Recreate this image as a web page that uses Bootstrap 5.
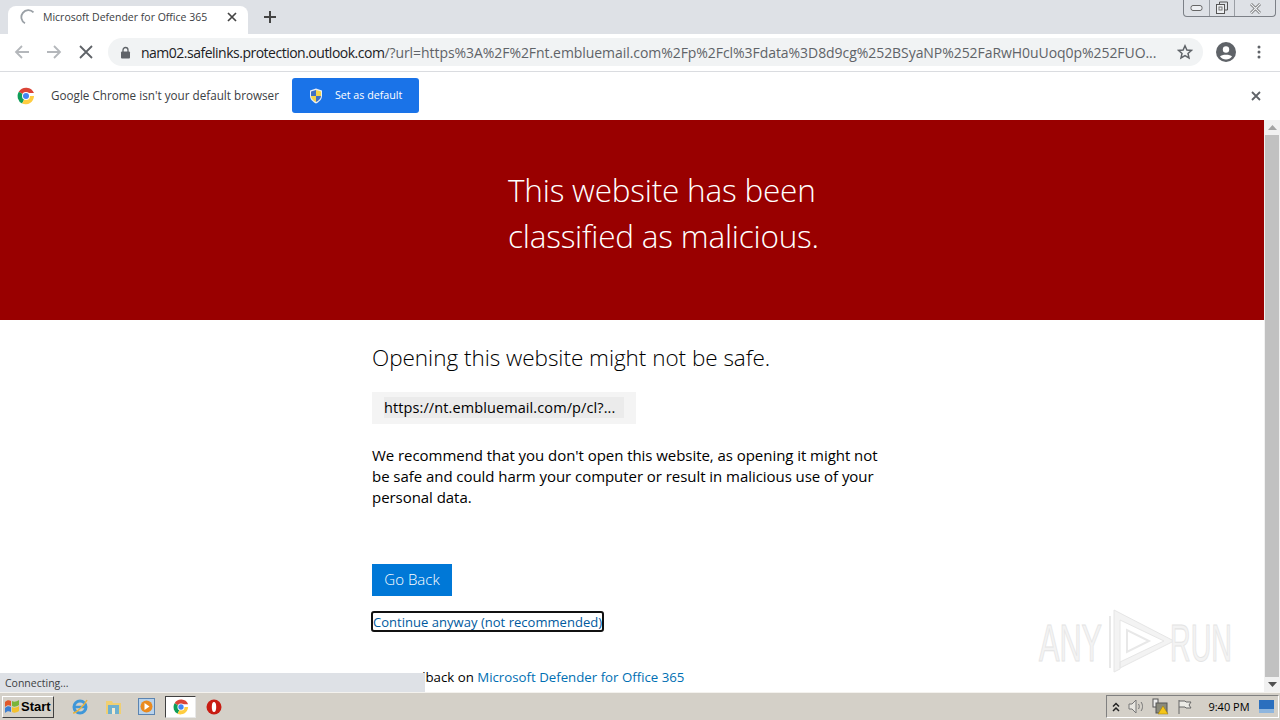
<!DOCTYPE html>
<html lang="en">
<head>
  <meta charset="UTF-8" />
  <title>Microsoft Defender for Office 365</title>
  <link href="https://cdn.jsdelivr.net/npm/bootstrap@5.3.0/dist/css/bootstrap.min.css" rel="stylesheet" />
  <style>
    html, body { height: 720px; overflow: hidden; }
    body { font-family: "Liberation Sans", Arial, sans-serif; color: #000; background: #fff; }

    /* chrome */
    .tab-strip { height: 34px; background: #dee1e6; }
    .tab-item { width: 240px; height: 28px; margin: 6px 0 0 8px; padding: 0 0 6px 12px; background: #fff; border-radius: 8px 8px 0 0; font: 10.5px "Open Sans", sans-serif; color: #3c4043; }
    .tab-title { margin-left: 7px; width: 184px; white-space: nowrap; }
    .new-tab { margin: 6px 0 0 14px; }
    .win-btns { width: 93px; height: 17px; margin: 0 4px 0 auto; border: 1px solid #7c8087; border-top: 0; border-radius: 0 0 4px 4px; }
    .win-btns > div { flex: 0 0 25px; border-left: 1px solid #9a9ea4; }
    .win-btns > div:first-child { border-left: 0; }
    .win-btns > div:last-child { flex: 1 1 0; }
    .tool-bar { height: 38px; padding: 0 0 1px 14px; background: #fff; border-bottom: 1px solid #dadce0; }
    .tool-gap { width: 48px; }
    .omni-box { width: 1095px; height: 28px; margin-left: 14px; padding: 0 10px 0 12px; background: #f1f3f4; border-radius: 14px; font: 14px "Open Sans", sans-serif; color: #5f6368; letter-spacing: -.06px; white-space: nowrap; overflow: hidden; }
    .omni-host { color: #202124; letter-spacing: -.5px; }
    .omni-url { margin-left: 10px; flex: 1; overflow: hidden; }
    .profile-btn { margin-left: 13px; }
    .menu-btn { margin-left: 21px; }
    .info-bar { height: 48px; padding-left: 17px; background: #fff; font: 11.7px "Open Sans", sans-serif; color: #3c4043; }
    .info-text { margin: 0 0 2px 16px; }
    .set-default { width: 127px; height: 35px; margin: 0 0 1px 13px; background: #1a73e8; border-radius: 3px; color: #fff; font-size: 10.7px; padding-left: 17px; gap: 12px; }
    .set-label { margin-bottom: 1px; }
    .info-close { margin: 0 19px 0 auto; }

    /* page */
    .page-area { height: 572px; position: relative; overflow: hidden; font-family: "Open Sans", sans-serif; }
    .page-main { width: 1264px; }
    .danger-banner { height: 200px; background: #990000; color: #fff; padding: 47px 0 0 508px; font-weight: 300; font-size: 31.5px; line-height: 46px; letter-spacing: -.2px; }
    .warn-body { padding: 22px 0 0 372px; }
    .warn-title { font-size: 22.5px; font-weight: 300; line-height: 32px; margin: 0; letter-spacing: -.03px; }
    .url-box { width: 264px; height: 32px; margin-top: 18px; padding: 5px 12px; background: #f4f4f4; font-size: 14.5px; font-weight: 400; line-height: 21px; letter-spacing: .1px; }
    .url-inner { background: #ebebeb; white-space: nowrap; }
    .warn-text { width: 512px; margin: 21px 0 0; font-size: 15px; font-weight: 400; line-height: 21px; letter-spacing: -.05px; }
    .go-back { display: block; width: 80px; height: 32px; margin-top: 56px; padding: 0; background: #0078d7; border: 0; border-radius: 0; color: #fff; font-size: 15px; font-weight: 300; line-height: 31px; }
    .go-back:hover { background: #0078d7; color: #fff; }
    .continue-link { display: inline-block; margin: 15px 0 0 -1px; height: 21px; padding: 0; border: 2px solid #111; border-radius: 3px; color: #005a9e; font-size: 13px; line-height: 18px; text-decoration: none; letter-spacing: .03px; }
    .feedback-line { margin: 34px 0 0; font-size: 13.25px; line-height: 20px; }
    .feedback-line a { color: #006fb3; text-decoration: none; }

    .page-scroll { width: 16px; background: #f1f1f1; position: absolute; top: 0; right: 0; bottom: 0; }
    .scroll-arrow { height: 15px; }
    .scroll-thumb { flex: 1; background: #c1c1c1; margin: 0 1px; }
    .status-bubble { position: absolute; left: 0; bottom: 0; width: 425px; height: 19px; padding-left: 5px; background: #dee1e6; font-size: 10.5px; line-height: 20px; color: #3c4043; }
    .any-mark { position: absolute; left: 1034px; top: 486px; }
    .any-mark text { font-family: "Liberation Sans", sans-serif; font-size: 52px; fill: #f3f3f3; stroke: #e4e4e4; stroke-width: 1; }

    /* taskbar */
    .task-bar { height: 28px; background: #d4d0c8; border-top: 1px solid #f4f2ee; }
    .start-btn { width: 52px; height: 22px; margin-left: 2px; gap: 1px; background: #d4d0c8; border: 1px solid; border-color: #fff #404040 #404040 #fff; font: bold 13px "Liberation Sans", sans-serif; padding-left: 1px; }
    .quick-icon { margin-left: 16px; }
    .ie-icon { margin-left: 17px; }
    .active-task { width: 31px; height: 22px; margin-left: 10px; background: #fff; border: 1px solid; border-color: #404040 #e8e8e8 #e8e8e8 #404040; }
    .stop-icon { margin-left: 10px; }
    .tray-box { width: 173px; height: 23px; margin: 0 1px 0 auto; padding-left: 5px; gap: 8px; border: 1px solid; border-color: #808080 #fff #fff #808080; font: 11px "Open Sans", sans-serif; }
    .tray-clock { margin-left: 7px; width: 44px; white-space: nowrap; }
  </style>
</head>
<body>
  <!-- tab strip -->
  <div class="tab-strip d-flex align-items-start">
    <div class="tab-item d-flex align-items-center">
      <svg width="16" height="16" viewBox="0 0 16 16"><path d="M13.5 3.4A7 7 0 1 0 5 14.3" fill="none" stroke="#9aa0a6" stroke-width="1.8"/></svg>
      <span class="tab-title">Microsoft Defender for Office 365</span>
      <svg width="10" height="10" viewBox="0 0 10 10"><path d="M1 1l8 8M9 1l-8 8" stroke="#444" stroke-width="1.7"/></svg>
    </div>
    <svg class="new-tab" width="16" height="22" viewBox="0 0 16 22"><path d="M8 5v12M2 11h12" stroke="#444" stroke-width="2"/></svg>
    <div class="win-btns d-flex">
      <div class="d-flex align-items-center justify-content-center"><svg width="14" height="8" viewBox="0 0 14 8"><rect x="1" y="1.500" width="11" height="5" rx="2" fill="#eef0f3" stroke="#666"/></svg></div>
      <div class="d-flex align-items-center justify-content-center"><svg width="14" height="14" viewBox="0 0 14 14"><path d="M4.500 3V1h8v8h-3" fill="none" stroke="#555"/><rect x="1.500" y="3.500" width="8" height="9" fill="#eef0f3" stroke="#555"/><rect x="4" y="6" width="3" height="3" fill="none" stroke="#777"/></svg></div>
      <div class="d-flex align-items-center justify-content-center"><svg width="13" height="11" viewBox="0 0 13 11"><path d="M2 1l9 9M11 1l-9 9" stroke="#666" stroke-width="2.600"/><path d="M2 1l9 9M11 1l-9 9" stroke="#eef0f3" stroke-width="1.200"/></svg></div>
    </div>
  </div>

  <!-- address bar -->
  <div class="tool-bar d-flex align-items-center">
    <svg width="16" height="16" viewBox="0 0 16 16"><path d="M15 8H2M8 2L2 8l6 6" fill="none" stroke="#b4b7bb" stroke-width="1.800"/></svg>
    <div class="tool-gap d-flex justify-content-center"><svg width="16" height="16" viewBox="0 0 16 16"><path d="M1 8h13M8 2l6 6-6 6" fill="none" stroke="#b4b7bb" stroke-width="1.800"/></svg></div>
    <svg width="16" height="16" viewBox="0 0 16 16"><path d="M2 2l12 12M14 2L2 14" stroke="#5f6368" stroke-width="1.800"/></svg>
    <div class="omni-box d-flex align-items-center">
      <svg width="11" height="13" viewBox="0 0 11 13"><path d="M3 6V4a2.500 2.500 0 0 1 5 0v2" fill="none" stroke="#5f6368" stroke-width="1.300"/><rect x="1" y="5.500" width="9" height="7" rx="1" fill="#5f6368"/></svg>
      <div class="omni-url"><span class="omni-host">nam02.safelinks.protection.outlook.com</span>/?url=https%3A%2F%2Fnt.embluemail.com%2Fp%2Fcl%3Fdata%3D8d9cg%252BSyaNP%252FaRwH0uUoq0p%252FUO...</div>
      <svg class="ms-2" width="16" height="16" viewBox="0 0 16 16"><path d="M8 1.800l1.900 4.200 4.500.4-3.400 3 1 4.500L8 11.500l-4 2.400 1-4.500-3.400-3 4.500-.4z" fill="none" stroke="#5f6368" stroke-width="1.500"/></svg>
    </div>
    <svg class="profile-btn" width="20" height="20" viewBox="0 0 20 20"><circle cx="10" cy="10" r="10" fill="#5f6368"/><circle cx="10" cy="7.500" r="3.200" fill="#fff"/><path d="M4 14.500c1.500-2.500 10.500-2.500 12 0-1.500 2-3.500 3-6 3s-4.500-1-6-3z" fill="#fff"/></svg>
    <svg class="menu-btn" width="4" height="14" viewBox="0 0 4 14"><circle cx="2" cy="2" r="1.500" fill="#5f6368"/><circle cx="2" cy="7" r="1.500" fill="#5f6368"/><circle cx="2" cy="12" r="1.500" fill="#5f6368"/></svg>
  </div>

  <!-- default browser bar -->
  <div class="info-bar d-flex align-items-center">
    <svg width="18" height="18" viewBox="0 0 18 18"><path d="M9 9L1.800 4.800A8.500 8.500 0 0 1 17 6H9z" fill="#db4437"/><path d="M9 9l-3.900 7.600A8.500 8.500 0 0 1 1.800 4.800z" fill="#0f9d58"/><path d="M9 9h8a8.500 8.500 0 0 1-11.900 7.600z" fill="#ffcd40"/><circle cx="9" cy="9" r="4" fill="#fff"/><circle cx="9" cy="9" r="3" fill="#4285f4"/></svg>
    <span class="info-text">Google Chrome isn't your default browser</span>
    <div class="set-default d-flex align-items-center">
      <svg width="14" height="16" viewBox="0 0 14 16"><path d="M7 .5l6 2v5c0 4-3 6.500-6 8-3-1.500-6-4-6-8v-5z" fill="#e9eef5"/><path d="M7 2L2 3.500V8h5zM7 8v6c2.500-1.300 5-3.300 5-6z" fill="#3f6fc4"/><path d="M7 2l5 1.500V8H7zM7 8v6C4.500 12.700 2 10.700 2 8z" fill="#f3d34a"/></svg>
      <span class="set-label">Set as default</span>
    </div>
    <svg class="info-close" width="10" height="10" viewBox="0 0 10 10"><path d="M1 1l8 8M9 1l-8 8" stroke="#5f6368" stroke-width="1.800"/></svg>
  </div>

  <!-- page -->
  <div class="page-area">
    <div class="page-main">
      <div class="danger-banner">This website has been<br>classified as malicious.</div>
      <div class="warn-body">
        <h1 class="warn-title">Opening this website might not be safe.</h1>
        <div class="url-box"><div class="url-inner">https://nt.embluemail.com/p/cl?...</div></div>
        <p class="warn-text">We recommend that you don't open this website, as opening it might not be safe and could harm your computer or result in malicious use of your personal data.</p>
        <a href="#" class="btn go-back">Go Back</a>
        <a href="#" class="continue-link">Continue anyway (not recommended)</a>
        <p class="feedback-line">For Feedback on <a href="#">Microsoft Defender for Office 365</a></p>
      </div>
    </div>
    <div class="page-scroll d-flex flex-column">
      <div class="scroll-arrow d-flex align-items-center justify-content-center"><svg width="9" height="5" viewBox="0 0 9 5"><path d="M4.500 0L9 5H0z" fill="#a3a3a3"/></svg></div>
      <div class="scroll-thumb"></div>
      <div class="scroll-arrow d-flex align-items-center justify-content-center"><svg width="9" height="5" viewBox="0 0 9 5"><path d="M4.500 5L9 0H0z" fill="#505050"/></svg></div>
    </div>
    <svg class="any-mark" width="204" height="72" viewBox="0 0 204 72">
      <text transform="translate(5 55) scale(.59 1)">ANY</text>
      <path d="M80 4v62l6-3V14l44 21-44 21v6l54-27z" fill="#f3f3f3" stroke="#e6e6e6"/>
      <path d="M76 10v52M93 24v22l22-11z" fill="none" stroke="#e8e8e8" stroke-width="2"/>
      <text transform="translate(136 55) scale(.55 1)">RUN</text>
    </svg>
    <div class="status-bubble">Connecting...</div>
  </div>

  <!-- windows taskbar -->
  <div class="task-bar d-flex align-items-center">
    <div class="start-btn d-flex align-items-center">
      <svg width="16" height="15" viewBox="0 0 16 15"><path d="M1 3c2-2 4-2 6-1v5C5 6 3 6 1 8z" fill="#e2592a"/><path d="M8 2c2 1 4 1 7-1v5c-3 2-5 2-7 1z" fill="#7bb53a"/><path d="M1 9c2-2 4-2 6-1v5c-2-1-4-1-6 1z" fill="#3d7fd1"/><path d="M8 8c2 1 4 1 7-1v5c-3 2-5 2-7 1z" fill="#f4c12d"/></svg>
      <span>Start</span>
    </div>
    <svg class="ie-icon" width="18" height="18" viewBox="0 0 18 18"><circle cx="9" cy="9" r="6" fill="none" stroke="#3f97d9" stroke-width="3"/><path d="M3 9h12" stroke="#3f97d9" stroke-width="2.500"/><path d="M2 15C6 15 14 6 16 2" fill="none" stroke="#e9b23a" stroke-width="1.500"/></svg>
    <svg class="quick-icon" width="17" height="17" viewBox="0 0 17 17"><path d="M1 3h6l1 2h8v11H1z" fill="#f0cf72"/><rect x="3" y="7" width="11" height="9" fill="#6fb0cf"/><rect x="7" y="10" width="3" height="6" fill="#f3ead0"/></svg>
    <svg class="quick-icon" width="17" height="17" viewBox="0 0 17 17"><rect x=".5" y=".5" width="16" height="16" fill="#b9d3ec" stroke="#5b84b1"/><circle cx="8.500" cy="8.500" r="6" fill="#ea8a1f"/><path d="M6.500 5l5 3.500-5 3.500z" fill="#fff"/></svg>
    <div class="active-task d-flex align-items-center justify-content-center">
      <svg width="16" height="16" viewBox="0 0 18 18"><path d="M9 9L1.800 4.800A8.500 8.500 0 0 1 17 6H9z" fill="#db4437"/><path d="M9 9l-3.900 7.600A8.500 8.500 0 0 1 1.800 4.800z" fill="#0f9d58"/><path d="M9 9h8a8.500 8.500 0 0 1-11.900 7.600z" fill="#ffcd40"/><circle cx="9" cy="9" r="4" fill="#fff"/><circle cx="9" cy="9" r="3" fill="#4285f4"/></svg>
    </div>
    <svg class="stop-icon" width="16" height="16" viewBox="0 0 16 16"><circle cx="8" cy="8" r="7.500" fill="#c81c12"/><ellipse cx="8" cy="8" rx="2.200" ry="5" fill="#fff"/></svg>
    <div class="tray-box d-flex align-items-center">
      <svg width="8" height="10" viewBox="0 0 8 10"><path d="M1 4.500l3-3 3 3M1 9l3-3 3 3" fill="none" stroke="#222" stroke-width="1.500"/></svg>
      <svg width="16" height="15" viewBox="0 0 16 15"><path d="M1 5h3l4-4v13l-4-4H1z" fill="#e8e6e0" stroke="#777"/><path d="M10.500 5c1 1.500 1 3.500 0 5M13 3c2 2.500 2 6.500 0 9" fill="none" stroke="#777"/></svg>
      <svg width="17" height="17" viewBox="0 0 17 17"><rect x="1" y="1" width="5" height="8" fill="#eee" stroke="#555"/><rect x="4" y="5" width="11" height="10" fill="#8a8a7c" stroke="#555"/><path d="M11 8l5 8H6z" fill="#f5c518" stroke="#9a7a00" stroke-width=".5"/></svg>
      <svg width="15" height="16" viewBox="0 0 15 16"><path d="M2 1v14M2 2h6l1 1h5l-2 3 2 3H9L8 8H2" fill="#ecebe6" stroke="#666"/></svg>
      <span class="tray-clock text-center">9:40 PM</span>
      <svg width="15" height="13" viewBox="0 0 15 13"><rect width="15" height="13" fill="#2b6fbe"/><rect y="9" width="15" height="4" fill="#8fb6de"/></svg>
    </div>
  </div>
  <script src="https://cdn.jsdelivr.net/npm/bootstrap@5.3.0/dist/js/bootstrap.bundle.min.js"></script>
</body>
</html>
